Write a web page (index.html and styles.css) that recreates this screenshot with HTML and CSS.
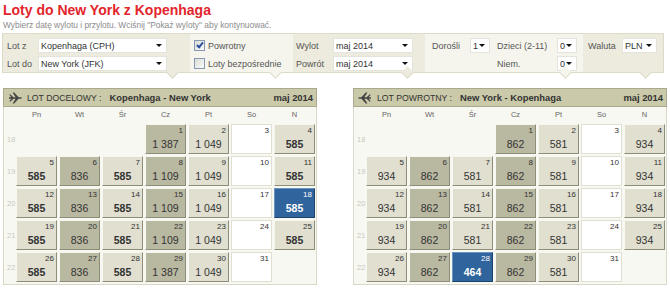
FILE: index.html
```html
<!DOCTYPE html>
<html lang="pl">
<head>
    <meta charset="UTF-8">
    <title>Loty do New York z Kopenhaga</title>
    <link rel="stylesheet" href="styles.css">
</head>
<body>
<div class="page">
    <h1 class="title">Loty do New York z Kopenhaga</h1>
    <p class="hint">Wybierz datę wylotu i przylotu. Wciśnij "Pokaż wyloty" aby kontynuować.</p>

    <form class="search">
        <div class="box box-route">
            <label>Lot z</label>
            <span class="sel"><select><option>Kopenhaga (CPH)</option></select></span>
            <label>Lot do</label>
            <span class="sel"><select><option>New York (JFK)</option></select></span>
        </div>
        <div class="box box-light box-opts">
            <label class="check"><input type="checkbox" checked><span class="tick"></span>Powrotny</label>
            <label class="check"><input type="checkbox"><span class="tick"></span>Loty bezpośrednie</label>
        </div>
        <div class="box box-dates">
            <label>Wylot</label>
            <span class="sel"><select><option>maj 2014</option></select></span>
            <label>Powrót</label>
            <span class="sel"><select><option>maj 2014</option></select></span>
        </div>
        <div class="box box-light box-pax">
            <label>Dorośli</label>
            <span class="sel"><select><option>1</option></select></span>
            <label>Dzieci (2-11)</label>
            <span class="sel"><select><option>0</option></select></span>
            <span></span>
            <span></span>
            <label>Niem.</label>
            <span class="sel"><select><option>0</option></select></span>
        </div>
        <div class="box box-currency">
            <label>Waluta</label>
            <span class="sel"><select><option>PLN</option></select></span>
        </div>
    </form>

    <div class="calendars">
        <div class="cal">
            <div class="cal-head">
                <span class="cal-title"><svg class="plane" width="14" height="12" viewBox="0 0 14 12"><path d="M1 5.3h2.2L1.2 2.4h1.3l2.9 2.9h2.2L4.6 0.6h1.6l4.4 4.7h2.2c0.6 0 1 0.3 1 0.7s-0.4 0.7-1 0.7h-2.2l-4.4 4.7H4.6l3-4.7H5.4L2.5 9.6H1.2l2-2.9H1z"/></svg>LOT DOCELOWY :<b>Kopenhaga - New York</b></span>
                <b>maj 2014</b>
            </div>
            <div class="cal-grid" id="outbound"></div>
        </div>
        <div class="cal">
            <div class="cal-head">
                <span class="cal-title"><svg class="plane back" width="14" height="12" viewBox="0 0 14 12"><path d="M1 5.3h2.2L1.2 2.4h1.3l2.9 2.9h2.2L4.6 0.6h1.6l4.4 4.7h2.2c0.6 0 1 0.3 1 0.7s-0.4 0.7-1 0.7h-2.2l-4.4 4.7H4.6l3-4.7H5.4L2.5 9.6H1.2l2-2.9H1z"/></svg>LOT POWROTNY :<b>New York - Kopenhaga</b></span>
                <b>maj 2014</b>
            </div>
            <div class="cal-grid" id="inbound"></div>
        </div>
    </div>
</div>

<script>
    const dayNames = ['Pn', 'Wt', 'Śr', 'Cz', 'Pt', 'So', 'N'];
    const weeks = [18, 19, 20, 21, 22];

    const outboundPrices = {
        1: '1 387', 2: '1 049', 4: '585', 5: '585', 6: '836', 7: '585', 8: '1 109', 9: '1 049', 11: '585',
        12: '585', 13: '836', 14: '585', 15: '1 109', 16: '1 049', 18: '585', 19: '585', 20: '836', 21: '585',
        22: '1 109', 23: '1 049', 25: '585', 26: '585', 27: '836', 28: '585', 29: '1 387', 30: '1 049'
    };

    const inboundPrices = {
        1: '862', 2: '581', 4: '934', 5: '934', 6: '862', 7: '581', 8: '862', 9: '581', 11: '934',
        12: '934', 13: '862', 14: '581', 15: '862', 16: '581', 18: '934', 19: '934', 20: '862', 21: '581',
        22: '862', 23: '581', 25: '934', 26: '934', 27: '862', 28: '464', 29: '862', 30: '581'
    };

    function buildCalendar(id, prices, picked) {
        const grid = document.getElementById(id);
        const toNumber = (p) => parseInt(p.replace(' ', ''), 10);
        const cheapest = Math.min(...Object.values(prices).map(toNumber));

        let html = '<span></span>';
        dayNames.forEach(name => {
            html += `<span class="dow">${name}</span>`;
        });

        // 1 May 2014 was a Thursday
        let day = -2;
        weeks.forEach(week => {
            html += `<span class="week">${week}</span>`;
            for (let col = 0; col < 7; col++, day++) {
                if (day < 1 || day > 31) {
                    html += '<span></span>';
                    continue;
                }
                const price = prices[day];
                if (!price) {
                    html += `<div class="day none"><span class="num">${day}</span></div>`;
                    continue;
                }
                let kind = (col === 1 || col === 3) ? 'dark' : 'light';
                if (day === picked) kind = 'picked';
                const bold = toNumber(price) === cheapest ? ' best' : '';
                html += `<div class="day ${kind}"><span class="num">${day}</span><span class="price${bold}">${price}</span></div>`;
            }
        });

        grid.innerHTML = html;
    }

    buildCalendar('outbound', outboundPrices, 18);
    buildCalendar('inbound', inboundPrices, 28);
</script>
</body>
</html>
```

FILE: styles.css
```css
body {
    margin: 0;
    padding: 0 3px;
    font-family: "Liberation Sans", Arial, sans-serif;
    color: #333;
    background-color: #fff;
}

.title {
    margin: 2px 0 0;
    font-size: 14px;
    line-height: 17px;
    color: #e2252c;
}

.hint {
    margin: 0;
    font-size: 8.4px;
    line-height: 12px;
    color: #8c8c8c;
}

/* search panel */

.search {
    display: grid;
    grid-template-columns: 187px 103px 132px 158px 80px;
    width: 660px;
    margin: 2px 0 0 -1px;
    border: 1px solid #dcdbc8;
    font-size: 9px;
    color: #555;
}

.box {
    position: relative;
    display: grid;
    grid-auto-rows: 15px;
    row-gap: 3px;
    align-items: center;
    padding: 4px 0 1px 4px;
    background-color: #ecebdd;
}

.box-light {
    background-color: #f5f5ee;
}

.box::after {
    content: "";
    position: absolute;
    right: 13px;
    bottom: -5px;
    width: 8px;
    height: 8px;
    background-color: inherit;
    border-right: 1px solid #dcdbc8;
    border-bottom: 1px solid #dcdbc8;
    transform: rotate(45deg);
    z-index: 1;
}

.box-route {
    grid-template-columns: 31px 129px;
}

.box-dates {
    grid-template-columns: 37px 80px;
    padding-left: 3px;
}

.box-pax {
    grid-template-columns: 38px 20px 67px 20px;
    padding-left: 7px;
}

.box-pax > label:nth-child(3),
.box-pax > label:nth-child(7) {
    padding-left: 7px;
}

.box-currency {
    grid-template-columns: 34px 35px;
    padding-left: 5px;
}

.sel {
    position: relative;
    display: block;
    height: 15px;
    box-sizing: border-box;
    background-color: #fff;
    border: 1px solid #e4e4dc;
}

.sel select {
    display: block;
    width: 100%;
    height: 13px;
    padding: 0 10px 0 2px;
    border: 0;
    background: transparent;
    appearance: none;
    font-family: inherit;
    font-size: 9px;
    color: #333;
    outline: none;
}

.sel::after {
    content: "";
    position: absolute;
    right: 4px;
    top: 5px;
    border-left: 3px solid transparent;
    border-right: 3px solid transparent;
    border-top: 3px solid #111;
    pointer-events: none;
}

.check {
    display: flex;
    align-items: center;
    gap: 3px;
}

.check input {
    display: none;
}

.tick {
    position: relative;
    width: 9px;
    height: 9px;
    border: 1px solid #8799b0;
    background: linear-gradient(135deg, #dcdcd6, #fafafa);
}

.check input:checked + .tick::after {
    content: "";
    position: absolute;
    left: 3px;
    top: 0;
    width: 2px;
    height: 5px;
    border: solid #2e50a0;
    border-width: 0 2px 2px 0;
    transform: rotate(40deg);
}

/* calendars */

.calendars {
    display: flex;
    gap: 36px;
    margin-top: 15px;
}

.cal {
    width: 312px;
    border: 1px solid #dad9c7;
    background-color: #f8f8f2;
}

.cal-head {
    display: flex;
    justify-content: space-between;
    align-items: center;
    height: 17px;
    margin: -1px -1px 0;
    padding: 0 3px 0 4px;
    background-color: #cac9a9;
    border: 1px solid #aaa98e;
    font-size: 8.7px;
    color: #333;
    white-space: nowrap;
}

.cal-head b {
    font-size: 9.4px;
}

.cal-title {
    display: flex;
    align-items: center;
}

.cal-title b {
    margin-left: 8px;
}

.plane {
    margin-right: 5px;
    fill: #444;
}

.plane.back {
    transform: scaleX(-1);
}

.cal-grid {
    display: grid;
    grid-template-columns: 10px repeat(7, 41px);
    grid-template-rows: 15px;
    grid-auto-rows: 30px;
    gap: 2px;
    padding: 0 1px 2px 0;
}

.dow {
    font-size: 7.5px;
    line-height: 15px;
    text-align: center;
    color: #666;
}

.week {
    align-self: center;
    padding-left: 3px;
    font-size: 7.5px;
    color: #c8c8be;
}

.day {
    box-sizing: border-box;
    padding: 1px 2px 0;
    border: 1px solid;
    border-color: #f7f7ef #8e8d79 #8e8d79 #f7f7ef;
    background-color: #e0dfd0;
}

.day.dark {
    background-color: #b9b8a1;
}

.day.none {
    background-color: #fff;
    border-color: #e0dfd1;
}

.day.picked {
    background-color: #30649c;
    border-color: #6a93c0 #1a426d #1a426d #6a93c0;
    color: #fff;
}

.num {
    display: block;
    text-align: right;
    font-size: 8px;
    line-height: 9px;
}

.price {
    display: block;
    margin-top: 3px;
    text-align: center;
    font-size: 10.5px;
    line-height: 12px;
}

.price.best {
    font-weight: bold;
}
```
